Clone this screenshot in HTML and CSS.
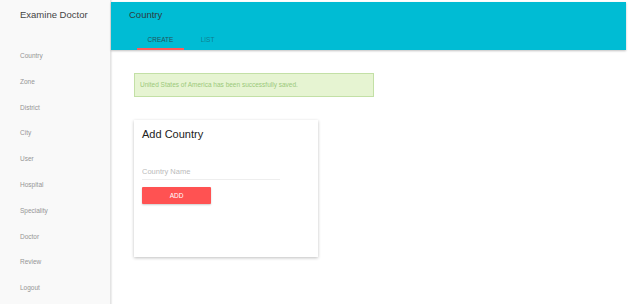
FILE: index.html
```html
<!DOCTYPE html>
<html lang="en">
<head>
    <meta charset="UTF-8">
    <title>Examine Doctor</title>
    <link rel="stylesheet" href="styles.css">
</head>
<body>
<div class="layout">
    <div class="sidebar">
        <div class="brand">Examine Doctor</div>
        <div class="nav-item">Country</div>
        <div class="nav-item">Zone</div>
        <div class="nav-item">District</div>
        <div class="nav-item">City</div>
        <div class="nav-item">User</div>
        <div class="nav-item">Hospital</div>
        <div class="nav-item">Speciality</div>
        <div class="nav-item">Doctor</div>
        <div class="nav-item">Review</div>
        <div class="nav-item">Logout</div>
    </div>
    <div class="main">
        <div class="header">
            <div class="page-title">Country</div>
            <div class="tabs">
                <div class="tab active">CREATE</div>
                <div class="tab">LIST</div>
            </div>
        </div>
        <div class="content">
            <div class="alert">United States of America has been successfully saved.</div>
            <div class="card">
                <div class="card-title">Add Country</div>
                <input class="field" type="text" placeholder="Country Name">
                <button class="btn-add">ADD</button>
            </div>
        </div>
    </div>
</div>
</body>
</html>
```

FILE: styles.css
```css
body {
    margin: 0;
    background: #fff;
    font-family: "Liberation Sans", Arial, sans-serif;
}

.layout {
    display: flex;
    height: 304px;
}

.sidebar {
    width: 110px;
    background: #f9f9f9;
    border-right: 1px solid #e4e4e4;
    box-shadow: 1px 0 1px #eee;
}

.brand {
    height: 43px;
    line-height: 29px;
    padding-left: 20px;
    font-size: 9.5px;
    color: #444;
}

.nav-item {
    height: 25.8px;
    line-height: 25.8px;
    padding-left: 20px;
    font-size: 6.5px;
    color: #959595;
}

.main {
    flex: 1;
    padding: 2px 2px 0 0;
}

.header {
    height: 48px;
    background: #00bcd4;
    box-shadow: 0 1px 2px rgba(0, 0, 0, 0.25);
    display: flex;
    flex-direction: column;
    justify-content: space-between;
}

.page-title {
    padding: 7px 0 0 18px;
    font-size: 9.5px;
    color: #2d3b40;
}

.tabs {
    display: flex;
    padding-left: 26px;
}

.tab {
    width: 47px;
    height: 23px;
    line-height: 25px;
    text-align: center;
    font-size: 6.5px;
    color: rgba(30, 60, 70, 0.5);
    box-sizing: border-box;
}

.tab.active {
    color: #24525c;
    border-bottom: 2px solid #ff5a5a;
}

.content {
    padding: 23px 0 0 23px;
}

.alert {
    width: 240px;
    height: 24px;
    box-sizing: border-box;
    background: #e6f4d2;
    border: 1px solid #c3e0a6;
    padding-left: 5px;
    line-height: 21px;
    font-size: 6.5px;
    color: #9bc97a;
}

.card {
    margin-top: 23px;
    width: 184px;
    height: 137px;
    box-sizing: border-box;
    padding: 8px 8px;
    background: #fff;
    box-shadow: 0 1px 3px rgba(0, 0, 0, 0.25);
}

.card-title {
    font-size: 11px;
    color: #222;
    line-height: 13px;
}

.field {
    display: block;
    margin-top: 22px;
    width: 138px;
    height: 16px;
    padding: 0;
    border: none;
    border-bottom: 1px solid #eee;
    font-family: "Liberation Sans", Arial, sans-serif;
    font-size: 7.5px;
    outline: none;
}

.field::placeholder {
    color: #bbb;
}

.btn-add {
    display: block;
    margin-top: 7px;
    width: 69px;
    height: 17px;
    border: none;
    border-radius: 1px;
    background: #ff5252;
    box-shadow: 0 1px 2px rgba(0, 0, 0, 0.2);
    color: #fff;
    font-family: "Liberation Sans", Arial, sans-serif;
    font-size: 6.5px;
    padding: 0;
}
```
